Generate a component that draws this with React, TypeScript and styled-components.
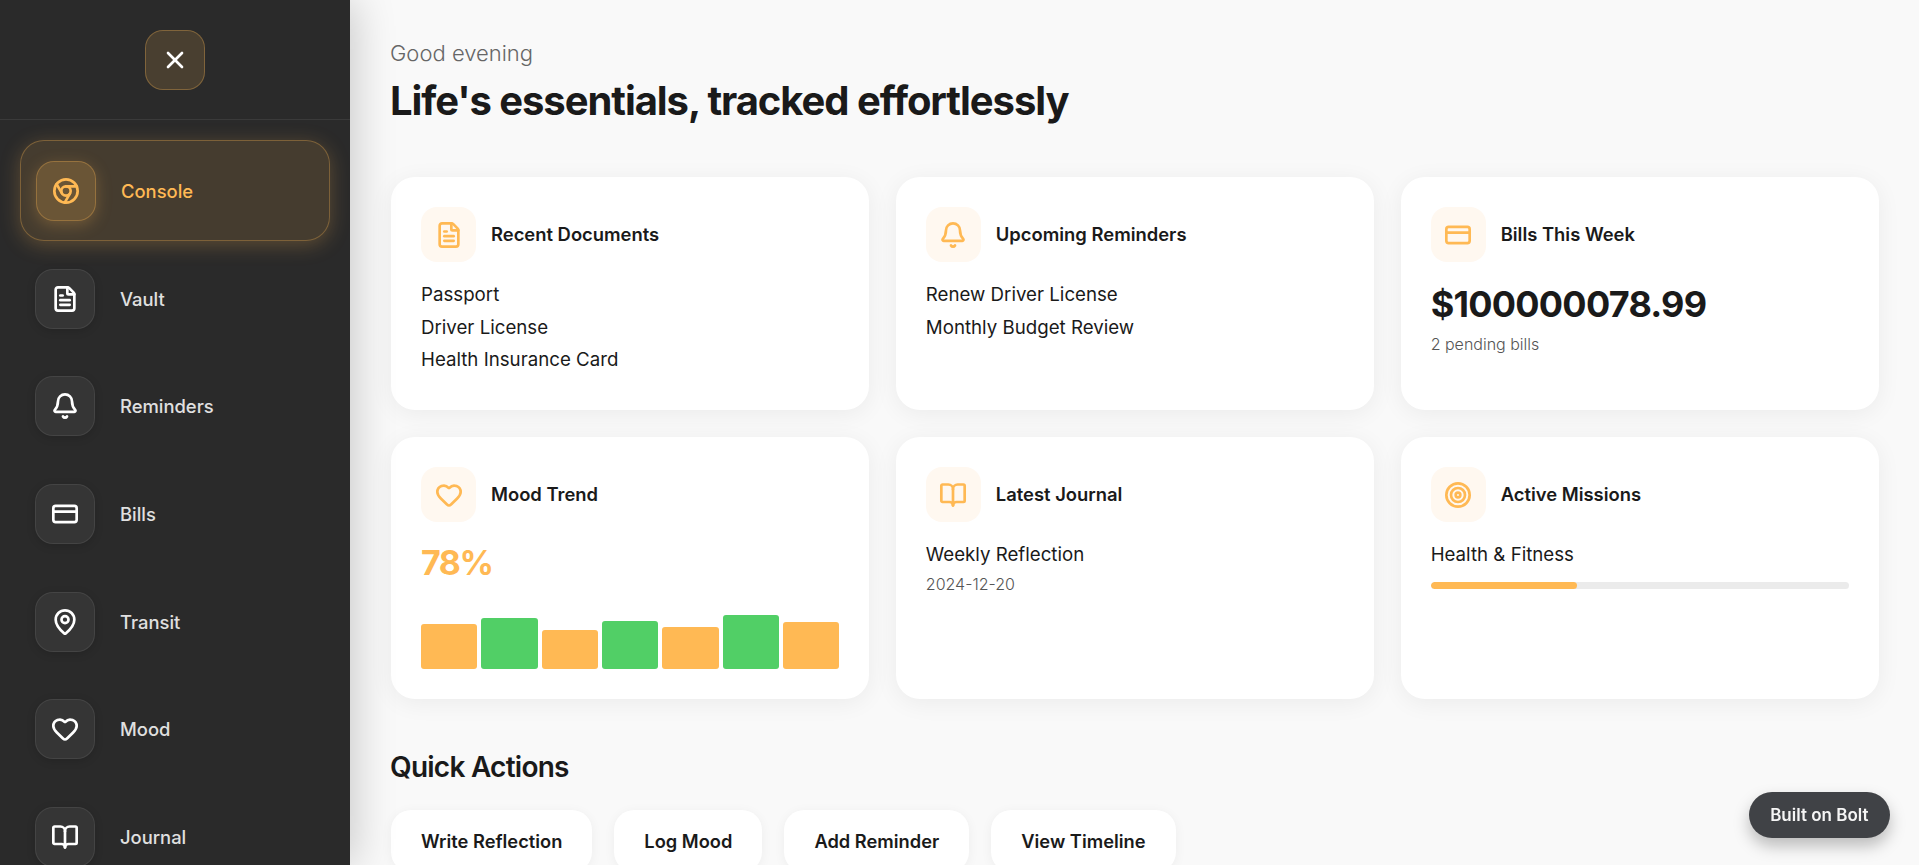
import React from 'react'
import styled, { createGlobalStyle } from 'styled-components'
import { X, Chrome, FileText, Bell, CreditCard, MapPin, Heart, BookOpen, Target, LucideIcon } from 'lucide-react'

const accent = '#ffb954'
const green = '#51cf66'
const ink = '#1a1a1a'
const iconStroke = 2.3

const GlobalStyle = createGlobalStyle`
    html, body {
        margin: 0;
        padding: 0;
        height: 100%;
        overflow: hidden;
        background: #f9f9f9;
        font-family: Inter, "Liberation Sans", sans-serif;
    }
    * { box-sizing: border-box; }
`

const Shell = styled.div`
    display: flex;
    height: 100vh;
    overflow: hidden;
`

const Sidebar = styled.aside`
    position: relative;
    z-index: 2;
    flex: 0 0 350px;
    height: 100%;
    overflow: hidden;
    background: #2a2a2a;
    box-shadow: 4px 0 40px rgba(0, 0, 0, 0.2);
`

const SidebarHead = styled.div`
    display: flex;
    justify-content: center;
    align-items: center;
    height: 120px;
    border-bottom: 1px solid #3a3a3a;
`

const CloseButton = styled.button`
    display: flex;
    align-items: center;
    justify-content: center;
    width: 60px;
    height: 60px;
    padding: 0;
    border-radius: 18px;
    border: 1px solid rgba(255, 185, 84, 0.3);
    background: rgba(255, 185, 84, 0.15);
    color: #fff;
`

const Nav = styled.nav`
    display: flex;
    flex-direction: column;
    gap: 7.7px;
    padding: 20px;
`

const NavItem = styled.div<{ $active?: boolean }>`
    display: flex;
    align-items: center;
    gap: 25px;
    height: ${p => (p.$active ? 101 : 100)}px;
    flex: 0 0 auto;
    padding: 0 ${p => (p.$active ? 15 : 14)}px;
    border-radius: 24px;
    border: 1px solid ${p => (p.$active ? 'rgba(255, 185, 84, 0.3)' : 'transparent')};
    background: ${p => (p.$active ? 'rgba(255, 185, 84, 0.13)' : 'transparent')};
    box-shadow: ${p => (p.$active ? '0 4px 20px rgba(255, 185, 84, 0.25)' : 'none')};
    color: ${p => (p.$active ? accent : '#e0e0e0')};
`

const NavIcon = styled.div<{ $active?: boolean }>`
    display: flex;
    align-items: center;
    justify-content: center;
    flex: 0 0 60px;
    height: 60px;
    border-radius: 18px;
    border: 1px solid ${p => (p.$active ? 'rgba(255, 185, 84, 0.3)' : 'rgba(255, 255, 255, 0.08)')};
    background: ${p => (p.$active ? 'rgba(255, 185, 84, 0.2)' : '#353535')};
    box-shadow: ${p => (p.$active ? '0 4px 16px rgba(255, 185, 84, 0.25)' : '0 2px 8px rgba(0, 0, 0, 0.15)')};
    color: ${p => (p.$active ? accent : '#fff')};
`

const NavLabel = styled.span`
    font-size: 18.4px;
    font-weight: 500;
`

const Main = styled.main`
    flex: 1;
    min-width: 0;
    height: 100%;
    overflow: hidden;
    padding: 40px 40px 40px 41px;
`

const Greeting = styled.div`
    margin-left: -1px;
    font-size: 22px;
    font-weight: 300;
    line-height: 26px;
    color: #666;
`

const Headline = styled.h1`
    margin: 11px 0 0 -1px;
    font-size: 40px;
    font-weight: 700;
    line-height: 48px;
    letter-spacing: -1.06px;
    color: ${ink};
`

const CardGrid = styled.div`
    display: grid;
    grid-template-columns: repeat(3, 1fr);
    grid-template-rows: 233px 262px;
    gap: 27px 26.5px;
    margin-top: 52px;
`

const Card = styled.section`
    padding: 30px;
    border-radius: 24px;
    background: #fff;
    box-shadow: 0 4px 24px rgba(0, 0, 0, 0.06);
`

const CardHead = styled.div`
    display: flex;
    align-items: center;
    gap: 15px;
    margin-bottom: 17px;
`

const CardIcon = styled.div`
    display: flex;
    align-items: center;
    justify-content: center;
    flex: 0 0 55px;
    height: 55px;
    border-radius: 16px;
    background: #fff8f0;
    color: ${accent};
`

const CardTitle = styled.h3`
    margin: 0;
    padding-bottom: 2px;
    font-size: 18.4px;
    font-weight: 600;
    color: ${ink};
`

const Line = styled.div`
    font-size: 18.7px;
    font-weight: 400;
    line-height: 32.5px;
    color: ${ink};
`

const Amount = styled.div`
    margin-bottom: 3px;
    font-size: 36px;
    font-weight: 700;
    line-height: 50px;
    letter-spacing: -0.75px;
    color: ${ink};
`

const Muted = styled.div`
    font-size: 16px;
    font-weight: 300;
    line-height: 24px;
    color: #555;
`

const Percent = styled.div`
    margin-top: 3px;
    font-size: 34px;
    font-weight: 700;
    line-height: 48px;
    letter-spacing: -1.5px;
    color: ${accent};
`

const Bars = styled.div`
    display: flex;
    align-items: flex-end;
    gap: 4px;
    height: 60px;
    margin-top: 22px;
`

const Bar = styled.div<{ $height: number; $good: boolean }>`
    flex: 1;
    height: ${p => p.$height}px;
    border-radius: 3px;
    background: ${p => (p.$good ? green : accent)};
`

const Track = styled.div`
    height: 7px;
    margin-top: 10px;
    border-radius: 4px;
    background: #ebebeb;
    overflow: hidden;
`

const Fill = styled.div`
    height: 100%;
    border-radius: 4px;
    background: ${accent};
`

const SectionTitle = styled.h2`
    margin: 50px 0 0 -1px;
    font-size: 28px;
    font-weight: 600;
    line-height: 36px;
    letter-spacing: -0.75px;
    color: ${ink};
`

const Actions = styled.div`
    display: flex;
    gap: 22px;
    margin-top: 25px;
`

const ActionButton = styled.button`
    height: 62px;
    padding: 0 30px;
    border: none;
    border-radius: 20px;
    background: #fff;
    box-shadow: 0 2px 12px rgba(0, 0, 0, 0.05);
    font-family: inherit;
    font-size: 18.3px;
    font-weight: 600;
    color: ${ink};
`

const BoltBadge = styled.a`
    position: fixed;
    right: 29px;
    bottom: 27px;
    display: flex;
    align-items: center;
    height: 46px;
    padding: 0 21.5px;
    border-radius: 23px;
    background: #404246;
    box-shadow: 0 8px 16px rgba(0, 0, 0, 0.25);
    font-size: 17px;
    font-weight: 600;
    color: #f5f5f5;
`

const navItems: { label: string; icon: LucideIcon; active?: boolean }[] = [
    { label: 'Console', icon: Chrome, active: true },
    { label: 'Vault', icon: FileText },
    { label: 'Reminders', icon: Bell },
    { label: 'Bills', icon: CreditCard },
    { label: 'Transit', icon: MapPin },
    { label: 'Mood', icon: Heart },
    { label: 'Journal', icon: BookOpen },
]

const moodBars = [45, 51, 39, 48, 42, 54, 47]

const CardHeader = ({ icon: Icon, title }: { icon: LucideIcon; title: string }) => (
    <CardHead>
        <CardIcon><Icon size={28} strokeWidth={iconStroke} /></CardIcon>
        <CardTitle>{title}</CardTitle>
    </CardHead>
)

export default function App() {
    return (
        <Shell>
            <GlobalStyle />
            <Sidebar>
                <SidebarHead>
                    <CloseButton><X size={28} strokeWidth={iconStroke} /></CloseButton>
                </SidebarHead>
                <Nav>
                    {navItems.map(({ label, icon: Icon, active }) => (
                        <NavItem key={label} $active={active}>
                            <NavIcon $active={active}><Icon size={28} strokeWidth={iconStroke} /></NavIcon>
                            <NavLabel>{label}</NavLabel>
                        </NavItem>
                    ))}
                </Nav>
            </Sidebar>
            <Main>
                <Greeting>Good evening</Greeting>
                <Headline>Life's essentials, tracked effortlessly</Headline>
                <CardGrid>
                    <Card>
                        <CardHeader icon={FileText} title="Recent Documents" />
                        <Line>Passport</Line>
                        <Line>Driver License</Line>
                        <Line>Health Insurance Card</Line>
                    </Card>
                    <Card>
                        <CardHeader icon={Bell} title="Upcoming Reminders" />
                        <Line>Renew Driver License</Line>
                        <Line>Monthly Budget Review</Line>
                    </Card>
                    <Card>
                        <CardHeader icon={CreditCard} title="Bills This Week" />
                        <Amount>$100000078.99</Amount>
                        <Muted>2 pending bills</Muted>
                    </Card>
                    <Card>
                        <CardHeader icon={Heart} title="Mood Trend" />
                        <Percent>78%</Percent>
                        <Bars>
                            {moodBars.map((h, i) => <Bar key={i} $height={h} $good={i % 2 === 1} />)}
                        </Bars>
                    </Card>
                    <Card>
                        <CardHeader icon={BookOpen} title="Latest Journal" />
                        <Line>Weekly Reflection</Line>
                        <Muted>2024-12-20</Muted>
                    </Card>
                    <Card>
                        <CardHeader icon={Target} title="Active Missions" />
                        <Line>Health &amp; Fitness</Line>
                        <Track><Fill style={{ width: '35%' }} /></Track>
                    </Card>
                </CardGrid>
                <SectionTitle>Quick Actions</SectionTitle>
                <Actions>
                    <ActionButton>Write Reflection</ActionButton>
                    <ActionButton>Log Mood</ActionButton>
                    <ActionButton>Add Reminder</ActionButton>
                    <ActionButton>View Timeline</ActionButton>
                </Actions>
            </Main>
            <BoltBadge>Built on Bolt</BoltBadge>
        </Shell>
    )
}
